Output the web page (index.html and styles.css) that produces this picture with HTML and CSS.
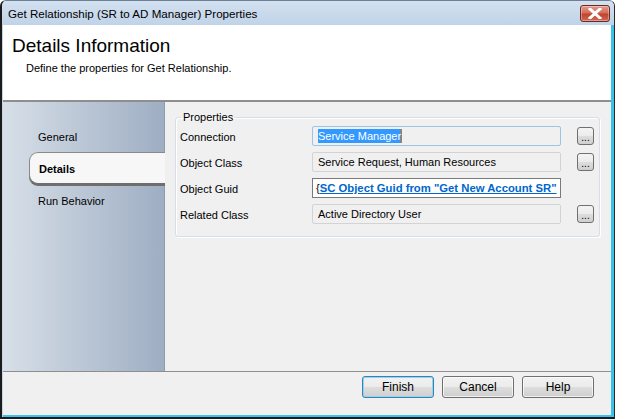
FILE: index.html
```html
<!DOCTYPE html>
<html>
<head>
<meta charset="utf-8">
<link rel="stylesheet" href="styles.css">
</head>
<body>
<div class="window">
  <div class="titlebar">
    <span class="title">Get Relationship (SR to AD Manager) Properties</span>
    <div class="close">
      <svg width="14" height="11" viewBox="0 0 14 11"><path d="M2 1 L12 10 M12 1 L2 10" stroke="#fff" stroke-width="3" stroke-linecap="square"/></svg>
    </div>
  </div>
  <div class="client">
    <div class="header">
      <div class="h-title">Details Information</div>
      <div class="h-sub">Define the properties for Get Relationship.</div>
    </div>
    <div class="main">
      <div class="nav">
        <div class="nav-item">General</div>
        <div class="nav-item selected">Details</div>
        <div class="nav-item">Run Behavior</div>
      </div>
      <div class="content">
        <fieldset class="group">
          <legend>Properties</legend>
          <div class="row">
            <span class="label">Connection</span>
            <div class="field focus"><span class="sel">Service Manager</span></div>
            <div class="dots">...</div>
          </div>
          <div class="row">
            <span class="label">Object Class</span>
            <div class="field">Service Request, Human Resources</div>
            <div class="dots">...</div>
          </div>
          <div class="row">
            <span class="label">Object Guid</span>
            <div class="field edit">{<a class="link">SC Object Guid from "Get New Account SR"</a></div>
            <div class="nodots"></div>
          </div>
          <div class="row">
            <span class="label">Related Class</span>
            <div class="field">Active Directory User</div>
            <div class="dots">...</div>
          </div>
        </fieldset>
      </div>
    </div>
    <div class="footer">
      <button class="btn default">Finish</button>
      <button class="btn">Cancel</button>
      <button class="btn">Help</button>
    </div>
  </div>
</div>
</body>
</html>
```

FILE: styles.css
```css
* { box-sizing: border-box; }
html, body { margin: 0; padding: 0; background: #ffffff; }
body { width: 617px; height: 419px; overflow: hidden; font-family: "Liberation Sans", Arial, sans-serif; }

.window {
  width: 615px;
  height: 419px;
  display: flex;
  flex-direction: column;
  border-left: 2px solid #1b1b1b;
  border-right: 1px solid #2a2a2a;
  border-bottom: 2px solid #1b1b1b;
  border-top: 1px solid #6b7f95;
  border-radius: 6px 6px 0 0;
  background: #c4d6ea;
  overflow: hidden;
}

.titlebar {
  height: 24px;
  flex: none;
  display: flex;
  align-items: center;
  justify-content: space-between;
  padding: 0 4px 0 6px;
  background: linear-gradient(#d3e1f0, #c0d3e8);
  font-size: 11.6px;
  color: #000;
}

.close {
  width: 30px;
  height: 17px;
  margin-top: 1px;
  border: 1px solid #6d2a22;
  border-radius: 3px;
  background: linear-gradient(#e49c8b 0%, #d46e5b 45%, #c0432e 55%, #cf6b55 100%);
  display: flex;
  align-items: center;
  justify-content: center;
  box-shadow: inset 0 0 0 1px rgba(255,255,255,0.35);
}

.client {
  flex: 1;
  display: flex;
  flex-direction: column;
  margin-left: 1px;
  border-right: 3px solid #37c3ec;
  border-bottom: 2px solid #37c3ec;
  background: #f0f0f0;
}

.header {
  height: 77px;
  flex: none;
  background: #ffffff;
  border-bottom: 2px solid #8e8e8e;
  padding: 10px 0 0 9px;
}
.h-title {
  font-size: 19px;
  color: #000;
  line-height: 22px;
}
.h-sub {
  font-size: 11px;
  margin: 5px 0 0 14px;
  color: #000;
}

.main {
  flex: 1;
  display: flex;
  min-height: 0;
}

.nav {
  width: 162px;
  flex: none;
  padding-top: 18px;
  background: linear-gradient(to right, #d7dfe8, #9eaec3);
  border-right: 1px solid #8d9bad;
}
.nav-item {
  height: 32px;
  margin-left: 26px;
  display: flex;
  align-items: center;
  padding: 1px 0 0 9px;
  font-size: 11px;
  color: #000;
}
.nav-item.selected {
  margin-right: -1px;
  background: #f7f7f7;
  border: 1px solid #8a8a8a;
  border-right: none;
  border-bottom-color: #6e6e6e;
  border-radius: 9px 0 0 9px;
  font-weight: bold;
  box-shadow: 0 2px 0 #6e6e6e;
}

.content {
  flex: 1;
  padding: 9px 11px 0 10px;
}

.group {
  margin: 0;
  padding: 0 4px 9px 4px;
  border: 1px solid #d5dfe5;
  border-radius: 3px;
  box-shadow: inset 1px 1px 0 #fff, 1px 1px 0 #fff;
  font-size: 11px;
}
.group legend {
  padding: 0 2px;
  margin-left: 1px;
  color: #000;
  line-height: 12px;
}

.row {
  height: 26px;
  display: flex;
  align-items: center;
}
.label {
  width: 132px;
  padding-top: 2px;
  color: #000;
}
.field {
  width: 249px;
  height: 20px;
  border: 1px solid #d3d3d3;
  border-radius: 2px;
  background: #f0f0f0;
  padding-left: 5px;
  display: flex;
  align-items: center;
  white-space: nowrap;
  overflow: hidden;
  color: #000;
}
.field.focus {
  border-color: #9dc3e6;
}
.sel {
  background: #3399ff;
  color: #fff;
  line-height: 14px;
  border-right: 1px solid #d9700f;
}
.field.edit {
  background: #fff;
  border: 1px solid #7a7a7a;
  border-radius: 0;
  padding-left: 3px;
}
.link {
  color: #0066cc;
  font-weight: bold;
  text-decoration: underline;
  font-size: 11.3px;
}
.dots, .nodots {
  width: 17px;
  height: 18px;
  margin-left: 16px;
}
.dots {
  border: 1px solid #707070;
  border-radius: 3px;
  background: linear-gradient(#f4f4f4 0%, #ebebeb 50%, #dddddd 51%, #cfcfcf 100%);
  font-size: 10px;
  line-height: 18px;
  text-align: center;
  color: #000;
  padding-top: 1px;
}

.footer {
  height: 44px;
  flex: none;
  border-top: 1px solid #8e8e8e;
  display: flex;
  justify-content: flex-end;
  align-items: flex-start;
  gap: 8px;
  padding: 4px 17px 0 0;
}
.btn {
  width: 72px;
  height: 22px;
  margin: 0;
  padding: 0;
  border: 1px solid #707070;
  border-radius: 3px;
  background: linear-gradient(#f2f2f2 0%, #ebebeb 50%, #dddddd 51%, #cfcfcf 100%);
  font-family: "Liberation Sans", Arial, sans-serif;
  font-size: 12px;
  color: #000;
  box-shadow: inset 0 0 0 1px rgba(255,255,255,0.7);
}
.btn.default {
  border-color: #3c7fb1;
  box-shadow: inset 0 0 0 1px #8fd6f5;
}
```
